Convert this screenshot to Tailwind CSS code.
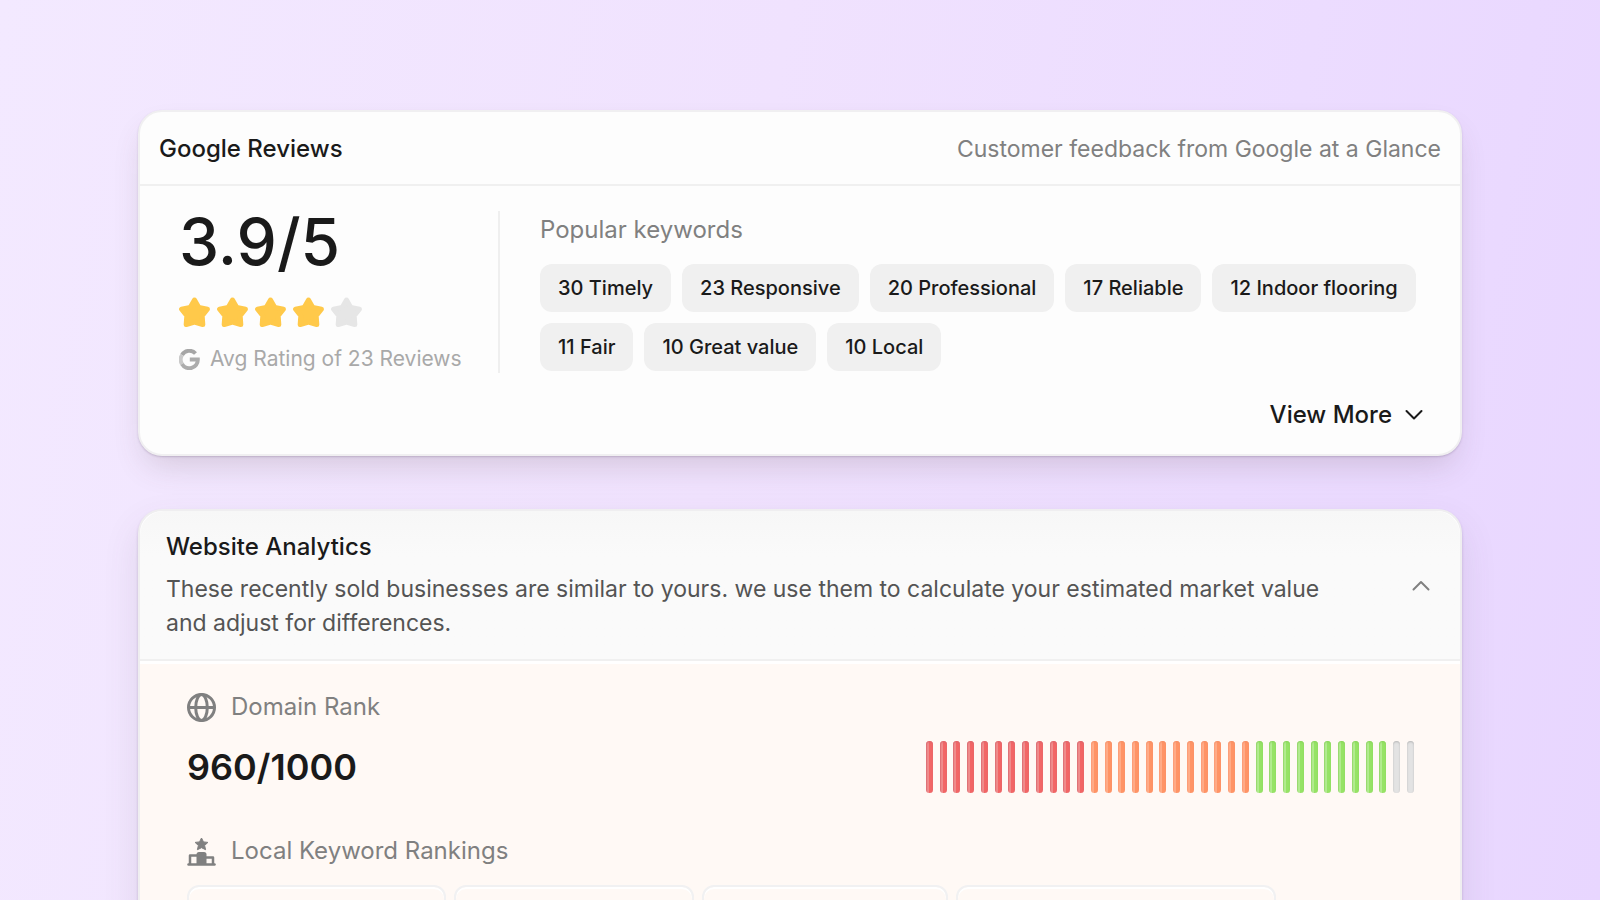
<!DOCTYPE html>
<html lang="en">
<head>
<meta charset="utf-8">
<meta name="viewport" content="width=device-width, initial-scale=1">
<title>Business report</title>
<script src="https://cdn.jsdelivr.net/npm/@tailwindcss/browser@4"></script>
</head>
<body class="h-screen overflow-hidden bg-[linear-gradient(100deg,#f3e9ff,#f0e2fe_45%,#ecdcff_75%,#e8d6ff)] font-['Inter','Liberation_Sans',sans-serif] text-[#1a1a1a]">
<svg class="hidden" aria-hidden="true">
  <symbol id="star" viewBox="0 0 31 31"><path stroke="currentColor" stroke-width="5" stroke-linejoin="round" fill="currentColor" d="M15.500 3L19.800 10.400L28.400 12.300L23.200 18.800L23.800 27.500L15.500 25L7.200 27.500L7.800 18.800L2.600 12.300L11.200 10.400Z"/></symbol>
</svg>
<main class="flex flex-col gap-[53px] px-[138px] pt-[110px]">
  <section class="rounded-3xl border-2 border-[#f0eff1] bg-[#fdfdfd] shadow-[0_1px_2px_rgba(60,40,80,0.2),0_16px_32px_-8px_rgba(90,70,70,0.2)]">
    <header class="flex items-center justify-between border-b-2 border-[#f0f0f0] px-[19px] pt-[19px] pb-[17px] leading-9">
      <h2 class="text-2xl leading-9 font-medium">Google Reviews</h2>
      <p class="text-[23px] text-[#808080]">Customer feedback from Google at a Glance</p>
    </header>
    <div class="flex pt-[25px] pr-8 pl-[39px]">
      <div class="flex w-[321px] shrink-0 flex-col border-r-2 border-[#efefef]">
        <p class="text-[64px] leading-[62px] font-medium">3.9/5</p>
        <div class="mt-6 flex gap-[7px] text-[#ffc94a]" role="img" aria-label="4 out of 5 stars">
          <svg class="size-[31px]"><use href="#star"/></svg>
          <svg class="size-[31px]"><use href="#star"/></svg>
          <svg class="size-[31px]"><use href="#star"/></svg>
          <svg class="size-[31px]"><use href="#star"/></svg>
          <svg class="size-[31px] text-[#e6e6e6]"><use href="#star"/></svg>
        </div>
        <div class="mt-[17px] flex items-center gap-2.5 text-[21px] leading-7 text-[#a9a9a9]">
          <svg class="size-[21px]" viewBox="0 0 21 21" fill="none" stroke-width="4"><path stroke="#a6a6a6" d="M3 6A8.500 8.500 0 0 1 16.500 4.500"/><path stroke="#c9c9c9" d="M3 6A8.500 8.500 0 0 0 3 15"/><path stroke="#acacac" d="M3 15A8.500 8.500 0 0 0 18.800 10.500H10.800"/></svg>
          <span>Avg Rating of 23 Reviews</span>
        </div>
      </div>
      <div class="min-w-0 flex-1 pt-px pl-10">
        <h3 class="text-2xl leading-9 text-[#808080]">Popular keywords</h3>
        <ul class="mt-4 flex flex-wrap gap-[11px] text-[20px] leading-6 font-medium whitespace-nowrap">
          <li class="rounded-xl bg-[#f0f0f0] px-[18px] py-3">30 Timely</li>
          <li class="rounded-xl bg-[#f0f0f0] px-[18px] py-3">23 Responsive</li>
          <li class="rounded-xl bg-[#f0f0f0] px-[18px] py-3">20 Professional</li>
          <li class="rounded-xl bg-[#f0f0f0] px-[18px] py-3">17 Reliable</li>
          <li class="rounded-xl bg-[#f0f0f0] px-[18px] py-3">12 Indoor flooring</li>
          <li class="rounded-xl bg-[#f0f0f0] px-[18px] py-3">11 Fair</li>
          <li class="rounded-xl bg-[#f0f0f0] px-[18px] py-3">10 Great value</li>
          <li class="rounded-xl bg-[#f0f0f0] px-[18px] py-3">10 Local</li>
        </ul>
      </div>
    </div>
    <div class="flex justify-end px-9 pt-6 pb-[21px]">
      <button type="button" class="flex items-center gap-3 text-2xl leading-9 font-medium">View More
        <svg class="size-5" viewBox="0 0 20 20" fill="none" stroke="currentColor" stroke-width="2" stroke-linecap="round" stroke-linejoin="round"><path d="M2.500 6L10 13.500L17.500 6"/></svg>
      </button>
    </div>
  </section>

  <section class="rounded-t-3xl border-2 border-b-0 border-[#efeef0] bg-white shadow-[0_2px_3px_rgba(60,40,80,0.2),0_16px_36px_rgba(90,70,90,0.12)]">
    <header class="flex items-center justify-between rounded-t-3xl border-b-2 border-[#f0f0f0] bg-linear-to-b from-[#f7f7f7] to-[#fafafa] to-30% pt-5 pr-[29px] pb-[19px] pl-[26px]">
      <div class="max-w-[1190px]">
        <h2 class="mb-[9px] text-2xl leading-8 font-medium">Website Analytics</h2>
        <p class="text-[23px] leading-[34px] text-[#545454]">These recently sold businesses are similar to yours. we use them to calculate your estimated market value and adjust for differences.</p>
      </div>
      <button type="button" aria-label="Collapse website analytics">
        <svg class="size-5" viewBox="0 0 20 20" fill="none" stroke="#808080" stroke-width="2" stroke-linecap="round" stroke-linejoin="round"><path d="M2.500 13.500L10 6L17.500 13.500"/></svg>
      </button>
    </header>
    <div class="mt-[3px] bg-[#fff9f5] pt-[27px] pr-[46px] pb-10 pl-[47px]">
      <h3 class="flex items-center gap-[15px] text-2xl leading-8 text-[#808080]">
        <svg class="size-[29px]" viewBox="0 0 29 29" fill="none" stroke="currentColor" stroke-width="3"><circle cx="14.500" cy="14.500" r="13"/><ellipse cx="14.500" cy="14.500" rx="5.800" ry="13"/><path d="M1.500 14.500H27.500"/></svg>
        Domain Rank
      </h3>
      <div class="mt-[18px] flex items-center justify-between">
        <p class="text-4xl leading-[52px] font-semibold">960/1000</p>
        <div id="rank-bars" class="flex h-[52px] w-[488px] justify-between" role="img" aria-label="Domain rank 960 out of 1000"></div>
      </div>
      <h3 class="mt-[42px] flex items-center gap-[15px] text-2xl leading-8 text-[#808080]">
        <svg class="size-[29px]" viewBox="0 0 29 29" fill="none" stroke="currentColor" stroke-width="2"><path fill="currentColor" stroke="currentColor" stroke-width="1" stroke-linejoin="round" d="M14.500 1L16.500 4.900L20.900 5.400L17.600 8.500L18.600 12.700L14.500 10.700L10.400 12.700L11.400 8.500L8.100 5.400L12.500 4.900Z"/><path stroke-linecap="round" stroke-width="2.500" d="M1.500 27.500H27.500"/><path stroke-linejoin="round" stroke-width="2.500" d="M3 27V18.500H10M19 20.500H26V27"/><path fill="currentColor" stroke="none" d="M9.500 28V17.500Q9.500 15 12 15H17Q19.500 15 19.500 17.500V28Z"/></svg>
        Local Keyword Rankings
      </h3>
      <div class="mt-[18px] flex gap-2">
        <div class="h-20 w-[259px] rounded-xl border-2 border-[#f1f1f2] shadow-[inset_0_2px_0_white]"></div>
        <div class="h-20 w-[240px] rounded-xl border-2 border-[#f1f1f2] shadow-[inset_0_2px_0_white]"></div>
        <div class="h-20 w-[246px] rounded-xl border-2 border-[#f1f1f2] shadow-[inset_0_2px_0_white]"></div>
        <div class="h-20 w-[320px] rounded-xl border-2 border-[#f1f1f2] shadow-[inset_0_2px_0_white]"></div>
      </div>
    </div>
  </section>
</main>
<script>
const tones = [
  [12, "w-[7px] rounded-full bg-[linear-gradient(90deg,#e0767c_1px,#ef8c8c_1px_3px,#f26666_3px)] shadow-[inset_0_1px_2px_#dc666c]"],
  [12, "w-[7px] rounded-full bg-[linear-gradient(90deg,#ffa57e_1px,#ffac88_1px_3px,#ff9466_3px)] shadow-[inset_0_1px_2px_#f58f66]"],
  [10, "w-[7px] rounded-full bg-[linear-gradient(90deg,#9fdc78_1px,#b2eb90_1px_3px,#96e366_3px)] shadow-[inset_0_1px_2px_#88d45c]"],
  [2, "w-[7px] rounded-full bg-[#e3e3e3] shadow-[inset_0_1px_2px_#b8b8b8]"]
];
const bars = document.getElementById("rank-bars");
for (const [count, classes] of tones) {
  for (let i = 0; i < count; i++) {
    const bar = document.createElement("span");
    bar.className = classes;
    bars.append(bar);
  }
}
</script>
</body>
</html>
